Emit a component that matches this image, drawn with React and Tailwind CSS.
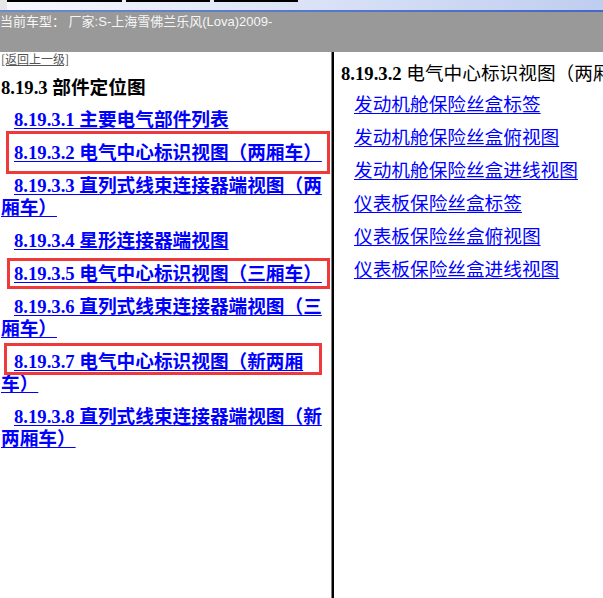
const serif = "font-['Liberation_Serif','Noto_Sans_CJK_SC',serif]";

const leftLinks = [
  "8.19.3.1 主要电气部件列表",
  "8.19.3.2 电气中心标识视图（两厢车）",
  "8.19.3.3 直列式线束连接器端视图（两厢车）",
  "8.19.3.4 星形连接器端视图",
  "8.19.3.5 电气中心标识视图（三厢车）",
  "8.19.3.6 直列式线束连接器端视图（三厢车）",
  "8.19.3.7 电气中心标识视图（新两厢车）",
  "8.19.3.8 直列式线束连接器端视图（新两厢车）",
];

const rightLinks = [
  "发动机舱保险丝盒标签",
  "发动机舱保险丝盒俯视图",
  "发动机舱保险丝盒进线视图",
  "仪表板保险丝盒标签",
  "仪表板保险丝盒俯视图",
  "仪表板保险丝盒进线视图",
];

// annotation boxes drawn over the left frame
const marks = [
  "left-[6px] top-[79px] w-[324px] h-[43px]",
  "left-[7px] top-[206px] w-[323px] h-[31px]",
  "left-[4px] top-[291px] w-[318px] h-[32px]",
];

export default function App() {
  return (
    <div className="h-[598px] w-[603px] overflow-hidden flex flex-col bg-white">
      {/* tab strip remnant */}
      <div className="h-[10px] bg-gradient-to-r from-[#f7f9fe] to-[#bfcdef] flex items-start">
        <div className="w-[7px] h-[10px] bg-[#e6e6e6]" />
        <div className="w-[115px] h-[2px] bg-black" />
        <div className="w-[4px]" />
        <div className="w-[84px] h-[2px] bg-black" />
        <div className="w-[4px]" />
        <div className="w-[84px] h-[2px] bg-black" />
      </div>
      <div className="h-[2px] bg-gradient-to-r from-[#6b8ad2] to-[#4468c4]" />
      <div className="h-[40px] bg-[#999999] text-[#f6f6f6] text-[13px] leading-[16px] pt-[2px] font-['Liberation_Sans','Noto_Sans_CJK_SC',sans-serif]">
        当前车型： 厂家:S-上海雪佛兰乐风(Lova)2009-
      </div>

      <div className="flex flex-1 min-h-0">
        {/* left frame */}
        <div className={`relative w-[331px] shrink-0 pl-[1px] ${serif}`}>
          <a className="block text-[12px] leading-[14px] text-[#555] underline font-['Noto_Sans_CJK_SC',sans-serif]">
            [返回上一级]
          </a>
          <h3 className="mt-[11px] text-[18.67px] leading-[22px] font-bold text-black">
            8.19.3 部件定位图
          </h3>
          <div className="mt-[10px]">
            {leftLinks.map((t) => (
              <p
                key={t}
                className="mb-[11px] indent-[13px] text-[18.67px] leading-[22px] font-bold"
              >
                <a className="text-[#0000ff] underline underline-offset-2">{t}</a>
              </p>
            ))}
          </div>
          {marks.map((m) => (
            <div key={m} className={`absolute border-[3px] border-[#ee3a3a] ${m}`} />
          ))}
        </div>

        {/* frame divider */}
        <div className="w-[3px] shrink-0 border-l border-[#808080] bg-black" />

        {/* right frame */}
        <div className={`flex-1 min-w-0 overflow-hidden pl-[7px] ${serif}`}>
          <h3 className="mt-[11px] whitespace-nowrap text-[18.67px] leading-[22px] text-black">
            <b>8.19.3.2</b> 电气中心标识视图（两厢车）
          </h3>
          <div className="mt-[9px] pl-[13px]">
            {rightLinks.map((t) => (
              <p key={t} className="mb-[11px] text-[18.67px] leading-[22px]">
                <a className="text-[#0000ff] underline underline-offset-2">{t}</a>
              </p>
            ))}
          </div>
        </div>
      </div>
    </div>
  );
}
